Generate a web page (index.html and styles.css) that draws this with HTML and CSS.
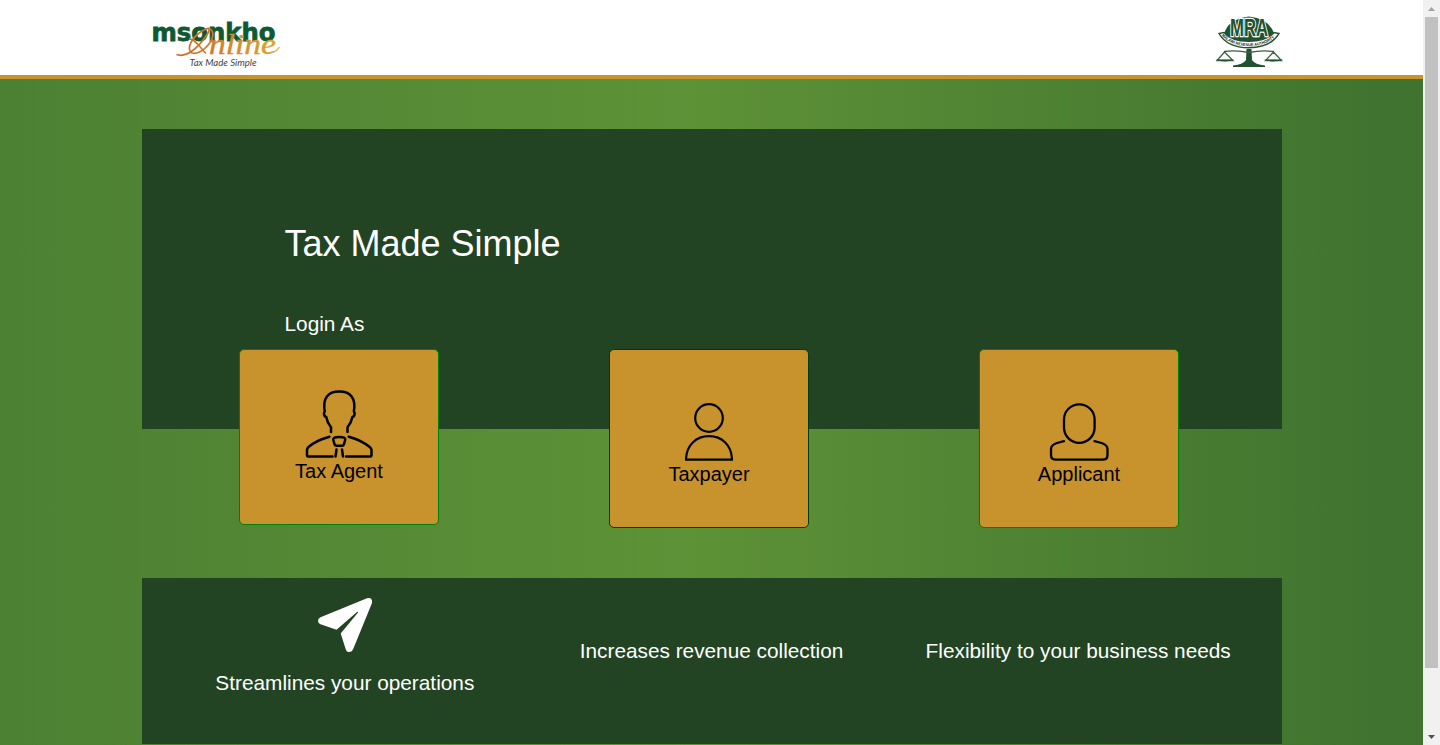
FILE: index.html
```html
<!DOCTYPE html>
<html lang="en">
<head>
<meta charset="utf-8">
<title>Msonkho Online</title>
<link rel="stylesheet" href="styles.css">
</head>
<body>
<div class="page">
  <header class="header">
    <div class="container header-row">
      <svg class="logo" width="140" height="56" viewBox="0 0 140 56">
        <defs>
          <linearGradient id="gold" gradientUnits="userSpaceOnUse" x1="34" y1="0" x2="138" y2="0">
            <stop offset="0" stop-color="#cb6a27"/><stop offset=".35" stop-color="#d27a2a"/><stop offset="1" stop-color="#d9aa2d"/>
          </linearGradient>
        </defs>
        <text class="logo-name" x="9.500" y="25.600" textLength="124" lengthAdjust="spacingAndGlyphs">msonkho</text>
        <path d="M34.500 39.500C44 43 56 34 66 18C69 12 65 13 60 16C49 23 44 34 50 38C57 40 68 31 70.500 22C72 16 68 12 64 14" fill="none" stroke="url(#gold)" stroke-width="1.700"/>
        <path d="M47 24C52 23 57 31 64 38.500" fill="none" stroke="url(#gold)" stroke-width="1.500"/>
        <path d="M131 37.500Q135 36 137.500 32" fill="none" stroke="url(#gold)" stroke-width="1.200"/>
        <text class="logo-script" x="67" y="38.600" textLength="67" lengthAdjust="spacingAndGlyphs" fill="url(#gold)">nline</text>
        <text class="logo-tag" x="47.500" y="51.200" textLength="67" lengthAdjust="spacingAndGlyphs">Tax Made Simple</text>
      </svg>
      <svg class="crest" width="68" height="54" viewBox="0 0 68 54">
        <path d="M9 19Q13 4 34 1.500Q55 4 59 19Q50 28 34 28Q18 28 9 19Z" fill="#20522f"/>
        <path d="M4 18.500Q12 32.500 34 32.800Q56 32.500 64 18.500L59 17.500Q52 26 34 26.300Q16 26 9 17.500Z" fill="#fff" stroke="#20522f" stroke-width="1.500"/>
        <path id="arc" d="M6.500 20.500Q16 31 34 31.200Q52 31 62 20.500" fill="none"/>
        <text class="crest-ring"><textPath href="#arc" textLength="58" lengthAdjust="spacingAndGlyphs">MALAWI REVENUE AUTHORITY</textPath></text>
        <g transform="translate(15 21) scale(1 1.200)">
          <text class="crest-name" x="0" y="0" textLength="38" lengthAdjust="spacingAndGlyphs">MRA</text>
        </g>
        <path d="M31.500 34H36.500L37 45Q40 49.500 50 50.500V52H18V50.500Q28 49.500 31 45Z" fill="#20522f"/>
        <path d="M9 36.500Q22 35 34 37.500Q46 35 59 36.500M9.500 37L2 45.500H18L9.500 37M58.500 37L50.500 45.500H66.500L58.500 37" fill="none" stroke="#35633f" stroke-width="1.300"/>
        <path d="M.500 44.500H19Q10 48.500 .500 44.500ZM49 44.500H68Q58 48.500 49 44.500Z" fill="#20522f"/>
      </svg>
    </div>
  </header>
  <main class="main">
    <section class="container hero">
      <h1 class="title">Tax Made Simple</h1>
      <h2 class="subtitle">Login As</h2>
      <div class="cards">
        <a class="card agent">
          <svg width="68" height="68" viewBox="0 0 68 68">
            <g fill="none" stroke="#000" stroke-width="2.500" stroke-linecap="round" stroke-linejoin="round">
              <path d="M26 42V37.300C23.500 34 21.800 30.500 21.200 27Q18.800 26.500 19 23L19.700 21.500C17.500 8 23 1.500 34.300 1.500S51 8 48.900 21.500L49.600 23Q49.800 26.500 47.400 27C46.800 30.500 45 34 42.500 37.300V42"/>
              <path d="M24.500 46.700C16 49 8 53 3.500 57Q2 58.500 2 60V65.500Q2 66.600 3.200 66.600H27.500M43.700 46.700C52 49 60 53 64.700 57Q66.500 58.500 66.500 60V65.500Q66.500 66.600 65.300 66.600H41"/>
              <path d="M31 47.300Q34 46.700 37.500 47.300Q40.800 48 40.200 50L38.900 54.300Q38.500 55.700 37 55.700H31.500Q30 55.700 29.600 54.300L28.300 50Q27.800 48 31 47.300ZM31.500 59.500L30.500 66.500M37 59.500L38 66.500"/>
            </g>
          </svg>
          <span class="label">Tax Agent</span>
        </a>
        <a class="card taxpayer">
          <svg width="48" height="58" viewBox="0 0 48 58">
            <g fill="none" stroke="#000" stroke-width="2.200">
              <circle cx="24" cy="15" r="13.800"/>
              <path d="M1.100 56.700V55C2 42 11 33.200 24 33.200S46 42 46.900 55V56.700Z"/>
            </g>
          </svg>
          <span class="label">Taxpayer</span>
        </a>
        <a class="card">
          <svg width="60" height="58" viewBox="0 0 60 58">
            <g fill="none" stroke="#000" stroke-width="2.300" stroke-linecap="round">
              <rect x="15" y="1.300" width="30.600" height="38.500" rx="15.300" ry="15.300"/>
              <path d="M15 38.200L8 40Q2 42 2 46V52Q2 56.700 7 56.700H53.500Q58.500 56.700 58.500 52V46Q58.500 42 52.500 40L45.500 38.200"/>
            </g>
          </svg>
          <span class="label">Applicant</span>
        </a>
      </div>
    </section>
    <section class="container features">
      <div class="feature">
        <svg class="plane" width="54" height="54" viewBox="0 0 54 54">
          <path fill="#fff" d="M49 .2Q55 -1 54 5L35 51.500Q33.800 54 31 54Q28.500 54 27.800 51.500L22.700 35.500L40 14.500Q40.500 13.500 39 14L18.500 31.700L2.500 26.200Q0 25.200 0 22.700Q0 20.500 2.500 19.300Z"/>
        </svg>
        <p class="caption">Streamlines your operations</p>
      </div>
      <div class="feature"><p class="caption alone">Increases revenue collection</p></div>
      <div class="feature"><p class="caption alone">Flexibility to your business needs</p></div>
    </section>
  </main>
</div>
<div class="scrollbar">
  <svg width="17" height="17" viewBox="0 0 17 17"><path d="M5 11L8.500 7L12 11Z" fill="#a3a3a3"/></svg>
  <div class="thumb"></div>
  <svg class="down" width="17" height="17" viewBox="0 0 17 17"><path d="M5 7L8.500 11L12 7Z" fill="#505050"/></svg>
</div>
</body>
</html>
```
FILE: styles.css
```css
* { box-sizing: border-box; }
body {
  margin: 0;
  height: 745px;
  overflow: hidden;
  display: flex;
  font-family: "Liberation Sans", Arial, sans-serif;
}
h1, h2, p { margin: 0; font-weight: 400; }
svg { display: block; flex: none; }

.page { width: 1423px; height: 745px; display: flex; flex-direction: column; }
.container { width: 1140px; margin: 0 auto; }

.header { height: 79px; background: #fff; border-bottom: 4px solid #c8932c; }
.header-row { display: flex; justify-content: space-between; padding-top: 15px; }
.crest { margin-right: -1px; }
.logo-name { font: 700 25.5px "DejaVu Sans", sans-serif; fill: #0f5932; stroke: #0f5932; stroke-width: .8px; }
.logo-script { font: italic 400 29px "Liberation Serif", serif; stroke: url(#gold); stroke-width: .4px; }
.logo-tag { font: italic 400 9px Lato, sans-serif; fill: #444; }
.crest-name { font: 700 20px "Liberation Sans", sans-serif; fill: #20522f; stroke: #fff; stroke-width: 2px; paint-order: stroke; }
.crest-ring { font: 700 4.2px "Liberation Sans", sans-serif; fill: #222; }

.main {
  flex: 1;
  padding-top: 50px;
  background: linear-gradient(90deg, #4c8033 0%, #508434 11%, #5e9237 48%, #40732f 97%, #40732f 100%);
}
.hero { height: 300px; background: #224423; padding: 94px 97px 0; }
.title { margin-left: 46px; font-size: 36px; line-height: 42px; color: #fff; }
.subtitle { margin: 47px 0 0 46px; font-size: 20.8px; line-height: 24px; color: #fff; }
.cards { display: flex; align-items: flex-start; gap: 170px; margin-top: 13px; }
.card {
  width: 200px;
  height: 179px;
  flex: none;
  display: flex;
  flex-direction: column;
  align-items: center;
  padding-top: 53px;
  background: #c8932c;
  border: 1px solid green;
  border-radius: 5px;
  color: #000;
}
.agent { height: 176px; padding-top: 40px; }
.taxpayer { border-color: #003d00; }
.label { padding-left: 1px; font-size: 20px; line-height: 26px; }

.features { display: flex; height: 166px; margin-top: 149px; padding: 0 20px; background: #224423; }
.feature { flex: 1; display: flex; flex-direction: column; align-items: center; }
.plane { margin-top: 20px; }
.caption { margin-top: 19px; font-size: 20.8px; line-height: 24px; color: #fff; }
.alone { margin-top: 61px; }

.scrollbar { width: 17px; height: 745px; display: flex; flex-direction: column; background: #f1f1f1; }
.thumb { width: 13px; height: 651px; margin-left: 2px; background: #c1c1c1; }
.down { margin-top: auto; }
```
